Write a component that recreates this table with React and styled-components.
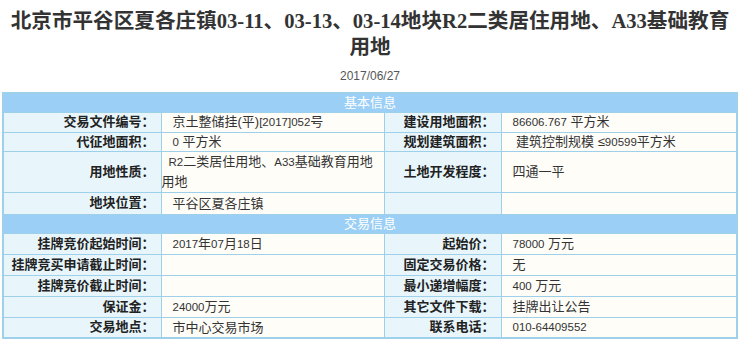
import styled, { createGlobalStyle } from "styled-components";

const GlobalStyle = createGlobalStyle`
  body {
    margin: 0;
    background: #ffffff;
    font-family: "Liberation Sans", "Noto Sans CJK SC", sans-serif;
  }
`;

const Page = styled.div`
  width: 740px;
  padding: 8px 0 0;
`;

const Title = styled.h1`
  margin: 0;
  font-family: "Liberation Serif", "Noto Sans CJK SC", serif;
  font-size: 20.6px;
  line-height: 26px;
  font-weight: bold;
  color: #333333;
  text-align: center;
`;

const DateLine = styled.div`
  margin-top: 8px;
  font-size: 12px;
  line-height: 16px;
  color: #555555;
  text-align: center;
`;

const Grid = styled.table`
  margin: 8px 0 0 2px;
  width: 734px;
  border-collapse: collapse;
  table-layout: fixed;
  border: 2px solid #9fd0ea;
`;

const Row = styled.tr`
  height: ${(p) => p.$h || 20}px;
`;

const Section = styled.td`
  padding: 0;
  background: #9ccff5;
  color: #ffffff;
  font-size: 13px;
  line-height: 16px;
  text-align: center;
  border: 1px solid #9fd0ea;
`;

const Label = styled.td`
  padding: 0 6px 0 0;
  background: #e8f6fc;
  color: #222222;
  font-size: 13px;
  line-height: 16px;
  font-weight: bold;
  text-align: right;
  white-space: nowrap;
  border: 1px solid #9fd0ea;
`;

const Value = styled.td`
  padding: 0 4px 0 ${(p) => (p.$wrap ? 0 : 11)}px;
  text-indent: ${(p) => (p.$wrap ? 7 : 0)}px;
  background: #fffdf8;
  color: #333333;
  font-size: 13px;
  line-height: ${(p) => (p.$wrap ? 20 : 17)}px;
  border: 1px solid #9fd0ea;
`;

const Num = styled.span`
  font-size: 11.5px;
`;

export default function App() {
  return (
    <Page>
      <GlobalStyle />
      <Title>
        北京市平谷区夏各庄镇03-11、03-13、03-14地块R2二类居住用地、A33基础教育
        <br />
        用地
      </Title>
      <DateLine>2017/06/27</DateLine>
      <Grid>
        <colgroup>
          <col style={{ width: 158 }} />
          <col style={{ width: 223 }} />
          <col style={{ width: 117 }} />
          <col style={{ width: 236 }} />
        </colgroup>
        <tbody>
          <Row $h={19}>
            <Section colSpan={4}>基本信息</Section>
          </Row>
          <Row $h={20}>
            <Label>交易文件编号：</Label>
            <Value>京土整储挂(平)<Num>[2017]052</Num>号</Value>
            <Label>建设用地面积：</Label>
            <Value><Num>86606.767</Num> 平方米</Value>
          </Row>
          <Row $h={19}>
            <Label>代征地面积：</Label>
            <Value><Num>0</Num> 平方米</Value>
            <Label>规划建筑面积：</Label>
            <Value>&nbsp;建筑控制规模 ≤<Num>90599</Num>平方米</Value>
          </Row>
          <Row $h={36}>
            <Label>用地性质：</Label>
            <Value $wrap>
              <Num>R2</Num>二类居住用地、<Num>A33</Num>基础教育用地
              <br />
              用地
            </Value>
            <Label>土地开发程度：</Label>
            <Value>四通一平</Value>
          </Row>
          <Row $h={22}>
            <Label>地块位置：</Label>
            <Value>平谷区夏各庄镇</Value>
            <Label />
            <Value />
          </Row>
          <Row $h={19}>
            <Section colSpan={4}>交易信息</Section>
          </Row>
          <Row $h={21}>
            <Label>挂牌竞价起始时间：</Label>
            <Value><Num>2017</Num>年<Num>07</Num>月<Num>18</Num>日</Value>
            <Label>起始价：</Label>
            <Value><Num>78000</Num> 万元</Value>
          </Row>
          <Row $h={21}>
            <Label>挂牌竞买申请截止时间：</Label>
            <Value />
            <Label>固定交易价格：</Label>
            <Value>无</Value>
          </Row>
          <Row $h={21}>
            <Label>挂牌竞价截止时间：</Label>
            <Value />
            <Label>最小递增幅度：</Label>
            <Value><Num>400</Num> 万元</Value>
          </Row>
          <Row $h={21}>
            <Label>保证金：</Label>
            <Value><Num>24000</Num>万元</Value>
            <Label>其它文件下载：</Label>
            <Value>挂牌出让公告</Value>
          </Row>
          <Row $h={21}>
            <Label>交易地点：</Label>
            <Value>市中心交易市场</Value>
            <Label>联系电话：</Label>
            <Value><Num>010-64409552</Num></Value>
          </Row>
        </tbody>
      </Grid>
    </Page>
  );
}
